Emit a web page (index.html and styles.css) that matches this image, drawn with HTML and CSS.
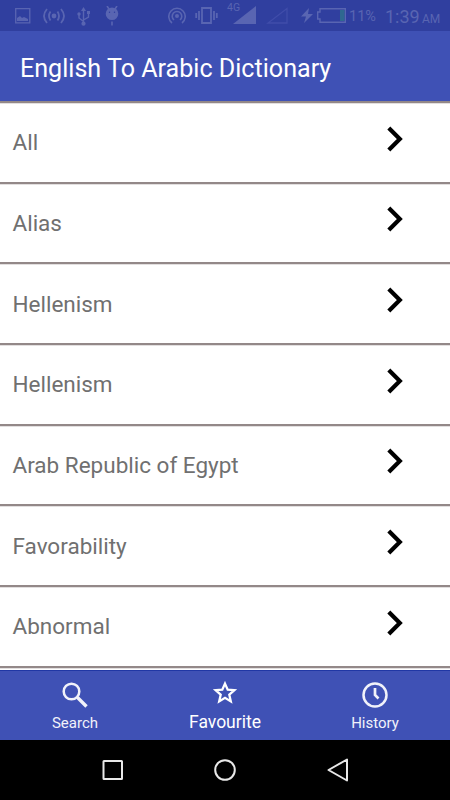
FILE: index.html
```html
<!DOCTYPE html>
<html lang="en">
<head>
  <meta charset="UTF-8">
  <meta name="viewport" content="width=device-width, initial-scale=1.0">
  <title>English To Arabic Dictionary</title>
  <link rel="stylesheet" href="styles.css">
</head>
<body>
  <div class="app">
    <div class="status-bar">
      <div class="status-left">
        <svg class="picture" width="16" height="16" viewBox="0 0 16 16"><path d="M.7.7h14.1v14.1H.7z" fill="none" stroke="currentColor" stroke-width="1.3"/><path d="M2 13v-3l3-2 2 2 2-1 4 2v2z" fill="currentColor"/></svg>
        <svg width="22" height="16" viewBox="0 0 22 16"><circle cx="11" cy="8" r="2.4" fill="currentColor"/><path d="M7.5 3.5q-3 4.500 0 9M14.500 3.500q3 4.500 0 9M4 1q-6 7 0 14M18 1q6 7 0 14" fill="none" stroke="currentColor" stroke-width="1.8"/></svg>
        <svg class="usb" width="14" height="20" viewBox="0 0 14 20"><path d="M6.500 2v14M2 7v4l4.500 3.500M11.500 6v4L6.500 13" fill="none" stroke="currentColor" stroke-width="1.4"/><path d="M6.500 0L9 4H4zM10 4h3v3h-3z" fill="currentColor"/><circle cx="2" cy="7" r="1.700" fill="currentColor"/><circle cx="6.500" cy="16.700" r="2.100" fill="currentColor"/></svg>
        <svg class="droid" width="14" height="20" viewBox="0 0 14 20"><path d="M2 0l2 3M12 0l-2 3M7 15.500v4" stroke="currentColor" stroke-width="1.600"/><path fill-rule="evenodd" d="M7 1.500a6.300 6.300 0 1 1 0 12.600A6.300 6.300 0 0 1 7 1.500M4.500 5.500a.7.7 0 1 0 0 1.400.7.7 0 0 0 0-1.400m5 0a.7.7 0 1 0 0 1.400.7.7 0 0 0 0-1.400" fill="currentColor"/></svg>
      </div>
      <div class="status-right">
        <svg class="hotspot" width="18" height="17" viewBox="0 0 18 17"><g fill="none" stroke="currentColor" stroke-width="1.600"><path d="M4 16a8.200 8.200 0 1 1 10 0"/><path d="M6 13a4.800 4.800 0 1 1 6 0"/></g><circle cx="9" cy="9" r="2" fill="currentColor"/></svg>
        <svg class="vibrate" width="23" height="17" viewBox="0 0 23 17"><path d="M7 1h9v15H7zM4 4v9M19 4v9M1.200 6v5M21.800 6v5" fill="none" stroke="currentColor" stroke-width="1.800"/></svg>
        <span class="network">4G</span>
        <svg class="signal" width="23" height="18" viewBox="0 0 23 18"><path d="M23 0v18H0z" fill="currentColor"/></svg>
        <svg class="no-signal" width="22" height="17" viewBox="0 0 22 17"><path d="M21 1.500V16H2z" fill="none" stroke="currentColor" stroke-width="1.300"/></svg>
        <svg class="bolt" width="12" height="15" viewBox="0 0 12 15"><path d="M8 0L0 8.500h5L3 15l9-9H7z" fill="currentColor"/></svg>
        <svg class="battery" width="29" height="15" viewBox="0 0 29 15"><path d="M3 .7h25.300v13.600H3V11H.7V4H3z" fill="none" stroke="currentColor" stroke-width="1.400"/><path class="charge" d="M23 2h4.500v11H23z"/></svg>
        <span class="percent">11%</span>
        <span class="clock">1:39</span>
        <span class="ampm">AM</span>
      </div>
    </div>

    <div class="toolbar"><h1>English To Arabic Dictionary</h1></div>

    <ul class="word-list">
      <li class="word"><span>All</span><svg class="chevron" viewBox="0 0 16 26"><path d="M1.800 2L12.800 13 1.800 24"/></svg></li>
      <li class="word"><span>Alias</span><svg class="chevron" viewBox="0 0 16 26"><path d="M1.800 2L12.800 13 1.800 24"/></svg></li>
      <li class="word"><span>Hellenism</span><svg class="chevron" viewBox="0 0 16 26"><path d="M1.800 2L12.800 13 1.800 24"/></svg></li>
      <li class="word"><span>Hellenism</span><svg class="chevron" viewBox="0 0 16 26"><path d="M1.800 2L12.800 13 1.800 24"/></svg></li>
      <li class="word"><span>Arab Republic of Egypt</span><svg class="chevron" viewBox="0 0 16 26"><path d="M1.800 2L12.800 13 1.800 24"/></svg></li>
      <li class="word"><span>Favorability</span><svg class="chevron" viewBox="0 0 16 26"><path d="M1.800 2L12.800 13 1.800 24"/></svg></li>
      <li class="word"><span>Abnormal</span><svg class="chevron" viewBox="0 0 16 26"><path d="M1.800 2L12.800 13 1.800 24"/></svg></li>
      <li class="word"></li>
    </ul>

    <div class="tabs">
      <div class="tab">
        <svg width="26" height="26" viewBox="0 0 26 26"><circle cx="9.500" cy="9.500" r="7.800" fill="none" stroke="currentColor" stroke-width="2.500"/><path d="M15.500 15.500l9 9" stroke="currentColor" stroke-width="3.400"/></svg>
        <span>Search</span>
      </div>
      <div class="tab active">
        <svg width="26" height="26" viewBox="0 0 26 26"><path d="M13 3.600l2.700 6 6.700.6-5.100 4.500 1.500 6.700-5.800-3.600-5.800 3.600 1.500-6.700-5.100-4.500 6.700-.6z" fill="none" stroke="currentColor" stroke-width="2.300"/></svg>
        <span>Favourite</span>
      </div>
      <div class="tab">
        <svg width="26" height="26" viewBox="0 0 26 26"><circle cx="13" cy="13" r="11.500" fill="none" stroke="currentColor" stroke-width="2.500"/><path d="M13 6v7l3.500 3.500" fill="none" stroke="currentColor" stroke-width="2.700"/></svg>
        <span>History</span>
      </div>
    </div>

    <div class="nav-bar">
      <svg width="24" height="24" viewBox="0 0 24 24"><rect x="2.500" y="3" width="18.500" height="18" rx=".5"/></svg>
      <svg width="24" height="24" viewBox="0 0 24 24"><circle cx="12" cy="12" r="9.800"/></svg>
      <svg width="24" height="24" viewBox="0 0 24 24"><path d="M21 1.500v21L2.500 12z"/></svg>
    </div>
  </div>
</body>
</html>
```
FILE: styles.css
```css
* {
  box-sizing: border-box;
}

body {
  margin: 0;
  font-family: Roboto, sans-serif;
  background: #fff;
}

svg {
  display: block;
  flex: none;
}

.app {
  width: 450px;
  height: 800px;
  display: flex;
  flex-direction: column;
  overflow: hidden;
}

.status-bar {
  flex: none;
  height: 31px;
  display: flex;
  justify-content: space-between;
  padding: 0 10px 0 15px;
  background: #303f9f;
  color: #5965b2;
}

.status-left,
.status-right {
  display: flex;
  align-items: center;
}

.status-left {
  gap: 14px;
}

.picture {
  margin-right: -2px;
}

.usb {
  margin: 2px 0 0 -2px;
}

.droid {
  margin-top: 1px;
}

.status-right {
  white-space: nowrap;
  line-height: 1;
}

.hotspot {
  margin-right: 1px;
}

.vibrate {
  margin-left: 8px;
}

.network {
  width: 12px;
  margin: 0 -6px 15px 9px;
  font-size: 10.5px;
}

.signal {
  margin-bottom: 2px;
}

.no-signal {
  margin-left: 10px;
  color: #404daa;
}

.bolt {
  margin-left: 13px;
}

.battery {
  margin-left: 4px;
}

.charge {
  fill: #2f6890;
}

.percent {
  width: 27px;
  margin: 3px 0 0 3px;
  font-size: 14.5px;
}

.clock {
  width: 34px;
  margin: 3px 0 0 9px;
  font-size: 18px;
}

.ampm {
  width: 18px;
  margin: 6px 0 0 3px;
  font-size: 12px;
}

.toolbar {
  flex: none;
  height: 70px;
  display: flex;
  align-items: center;
  padding: 4px 20px 0;
  background: #3f51b5;
}

h1 {
  margin: 0;
  font-size: 25.1px;
  font-weight: 400;
  color: #fff;
  white-space: nowrap;
}

.word-list {
  flex: 1;
  margin: 0;
  padding: 0;
  list-style: none;
  overflow: hidden;
}

.word {
  height: 80.67px;
  display: flex;
  align-items: center;
  justify-content: space-between;
  padding: 1px 47px 0 12.5px;
  border-top: 2px solid #938888;
  box-shadow: inset 0 1px #e2dfdf;
  font-size: 22.5px;
  color: #707070;
}

.chevron {
  width: 16px;
  height: 26px;
  margin-bottom: 8px;
  fill: none;
  stroke: #000;
  stroke-width: 4.2;
}

.word span {
  margin-bottom: 1px;
}

.tabs {
  flex: none;
  height: 70px;
  display: flex;
  background: #3f51b5;
  border-top: 1px solid #2037a5;
}

.tab {
  flex: 1;
  display: flex;
  flex-direction: column;
  align-items: center;
  padding-top: 11px;
  font-size: 15px;
  line-height: 20px;
  color: #f1f2fa;
}

.tab span {
  margin-top: 5px;
}

.active {
  padding-top: 9px;
  font-size: 17.5px;
  color: #fff;
}

.active span {
  margin-top: 6px;
}

.nav-bar {
  flex: none;
  height: 60px;
  display: flex;
  align-items: center;
  justify-content: center;
  gap: 88.5px;
  background: #000;
  fill: none;
  stroke: #e8e8e8;
  stroke-width: 2;
  stroke-linejoin: round;
}
```
